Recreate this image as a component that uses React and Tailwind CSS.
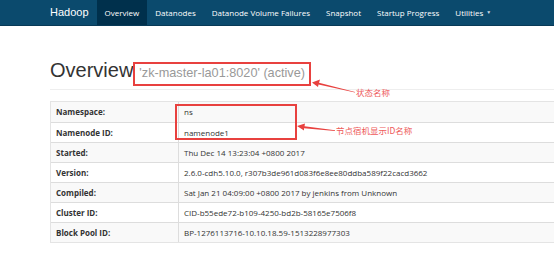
import React from "react";

const navItems = [
  "Datanodes",
  "Datanode Volume Failures",
  "Snapshot",
  "Startup Progress",
];

const rows = [
  ["Namespace:", "ns"],
  ["Namenode ID:", "namenode1"],
  ["Started:", "Thu Dec 14 13:23:04 +0800 2017"],
  ["Version:", "2.6.0-cdh5.10.0, r307b3de961d083f6e8ee80ddba589f22cacd3662"],
  ["Compiled:", "Sat Jan 21 04:09:00 +0800 2017 by jenkins from Unknown"],
  ["Cluster ID:", "CID-b55ede72-b109-4250-bd2b-58165e7506f8"],
  ["Block Pool ID:", "BP-1276113716-10.10.18.59-1513228977303"],
];

export default function App() {
  return (
    <div className="relative w-[554px] h-[258px] overflow-hidden bg-white">
      {/* Navbar */}
      <nav className="flex h-[26px] items-stretch bg-[#0b4a6d] border-b border-[#083a57] pl-[50px] text-white">
        <div className="flex items-center pr-[8px] text-[11px] font-['Liberation_Sans',sans-serif]">
          Hadoop
        </div>
        <div className="flex items-center bg-[#00304c] px-[8px] text-[8px] font-['Open_Sans',sans-serif]">
          Overview
        </div>
        {navItems.map((n) => (
          <div
            key={n}
            className="flex items-center px-[8px] text-[8px] font-['Open_Sans',sans-serif]"
          >
            {n}
          </div>
        ))}
        <div className="flex items-center gap-[3px] px-[8px] text-[8px] font-['Open_Sans',sans-serif]">
          Utilities
          <span className="text-[5px] text-[#c8d6e0]">▼</span>
        </div>
      </nav>

      {/* Main */}
      <main className="pl-[50px] w-[640px]">
        <div className="mt-[32px] flex h-[32px] items-baseline gap-[6px] border-b border-[#eeeeee] font-['Liberation_Sans',sans-serif]">
          <h1 className="text-[20px] leading-[24px] text-[#333333]">Overview</h1>
          <span className="text-[12.7px] leading-[12px] text-[#999999]">
            'zk-master-la01:8020' (active)
          </span>
        </div>

        <div className="mt-[11px] border border-[#e4e4e4] font-['Open_Sans',sans-serif] text-[8px] leading-[12px] text-[#333333]">
          {rows.map(([k, v], i) => (
            <div
              key={k}
              className={`flex h-[20px] items-center ${i > 0 ? "border-t border-[#dddddd]" : ""} ${
                i % 2 === 0 ? "bg-[#f9f9f9]" : "bg-white"
              }`}
            >
              <div className="flex h-full w-[128px] items-center border-r border-[#dddddd] pl-[5px] font-bold">
                {k}
              </div>
              <div className="pl-[5px]">{v}</div>
            </div>
          ))}
        </div>
      </main>

      {/* Annotations */}
      <div className="absolute left-[133px] top-[62px] h-[24px] w-[178px] border-2 border-[#e8413f]" />
      <div className="absolute left-[175px] top-[104px] h-[36px] w-[122px] border-2 border-[#e8413f]" />
      <svg className="absolute left-0 top-0" width="554" height="258">
        <polygon points="312,82.5 320,79.5 319,82.8 355,92 355,92.6 318.5,84.6 318,87" fill="#e8413f" />
        <polygon points="297,126 305,123.4 304.5,126.2 335,130.2 335,130.9 304,128.2 304,130.6" fill="#e8413f" />
      </svg>
      <div className="absolute left-[356px] top-[86px] text-[8.5px] leading-[12px] text-[#ee5a5a] font-['Noto_Sans_CJK_SC',sans-serif]">
        状态名称
      </div>
      <div className="absolute left-[336px] top-[124px] text-[8.5px] leading-[12px] text-[#ee5a5a] font-['Noto_Sans_CJK_SC',sans-serif]">
        节点宿机显示ID名称
      </div>
    </div>
  );
}
